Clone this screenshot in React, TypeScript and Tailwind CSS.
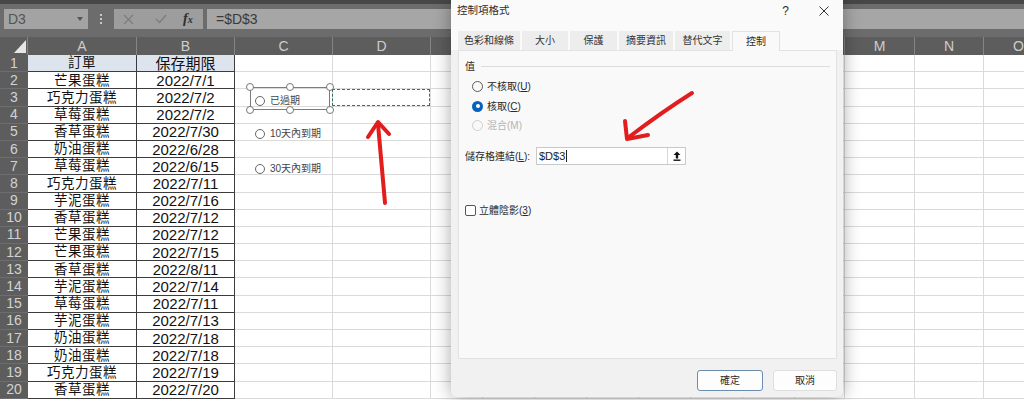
import React from "react";

// E-L sit under the dialog, so their letters are left out
const cols = [
  { k: "A", w: "w-[109px]" },
  { k: "B", w: "w-[98px]" },
  { k: "C", w: "w-[98px]" },
  { k: "D", w: "w-[98px]" },
  { k: "E", w: "w-[52px]", covered: true },
  { k: "F", w: "w-[52px]", covered: true },
  { k: "G", w: "w-[52px]", covered: true },
  { k: "H", w: "w-[52px]", covered: true },
  { k: "I", w: "w-[52px]", covered: true },
  { k: "J", w: "w-[52px]", covered: true },
  { k: "K", w: "w-[52px]", covered: true },
  { k: "L", w: "w-[50px]", covered: true },
  { k: "M", w: "w-[70px]" },
  { k: "N", w: "w-[69px]" },
  { k: "O", w: "w-[70px]" },
];

const orders = [
  ["訂單", "保存期限"],
  ["芒果蛋糕", "2022/7/1"],
  ["巧克力蛋糕", "2022/7/2"],
  ["草莓蛋糕", "2022/7/2"],
  ["香草蛋糕", "2022/7/30"],
  ["奶油蛋糕", "2022/6/28"],
  ["草莓蛋糕", "2022/6/15"],
  ["巧克力蛋糕", "2022/7/11"],
  ["芋泥蛋糕", "2022/7/16"],
  ["香草蛋糕", "2022/7/12"],
  ["芒果蛋糕", "2022/7/12"],
  ["芒果蛋糕", "2022/7/15"],
  ["香草蛋糕", "2022/8/11"],
  ["芋泥蛋糕", "2022/7/14"],
  ["草莓蛋糕", "2022/7/11"],
  ["芋泥蛋糕", "2022/7/13"],
  ["奶油蛋糕", "2022/7/18"],
  ["奶油蛋糕", "2022/7/18"],
  ["巧克力蛋糕", "2022/7/19"],
  ["香草蛋糕", "2022/7/20"],
];

const tabs = [
  { t: "色彩和線條", w: "w-[62px]" },
  { t: "大小", w: "w-[46px]" },
  { t: "保護", w: "w-[47px]" },
  { t: "摘要資訊", w: "w-[54px]" },
  { t: "替代文字", w: "w-[55px]" },
  { t: "控制", w: "w-[48px]", active: true },
];

function FormulaBar() {
  return (
    <div className="h-[37px] bg-[#6c6c6c] border-t-[4px] border-[#474747] flex items-start pt-[5px] pl-[4px] gap-[8px]">
      {/* name box */}
      <div className="w-[84px] shrink-0 h-[20px] bg-[#a3a3a3] flex items-center justify-between pl-[4px] pr-[5px] text-[14px] text-[#555]">
        <span>D3</span>
        <svg width="6" height="4" viewBox="0 0 6 4">
          <path d="M0 0 L6 0 L3 4 Z" fill="#555" />
        </svg>
      </div>
      <div className="w-[10px] shrink-0 h-[20px] flex flex-col items-center justify-center gap-[2px]">
        <span className="w-[2px] h-[2px] bg-[#c8c8c8]" />
        <span className="w-[2px] h-[2px] bg-[#c8c8c8]" />
        <span className="w-[2px] h-[2px] bg-[#c8c8c8]" />
      </div>
      <div className="w-[89px] shrink-0 h-[20px] bg-[#9d9d9d] flex items-center pl-[9px]">
        <svg width="11" height="11" viewBox="0 0 11 11" className="mr-[21px]">
          <path d="M1 1 L10 10 M10 1 L1 10" stroke="#7c7c7c" strokeWidth="1.2" />
        </svg>
        <svg width="12" height="10" viewBox="0 0 12 10" className="mr-[16px]">
          <path d="M1 5 L4.5 8.5 L11 1" stroke="#7c7c7c" strokeWidth="1.2" fill="none" />
        </svg>
        <span className="font-['Liberation_Serif',serif] italic text-[14px] text-[#2e2e2e] font-bold leading-none">
          f<span className="text-[10px]">x</span>
        </span>
      </div>
      <div className="flex-1 h-[20px] bg-[#a6a6a6] flex items-center pl-[9px] text-[14px] text-[#3a3a3a] -ml-[4px]">
        =$D$3
      </div>
    </div>
  );
}

function ColumnHeaders() {
  return (
    <div className="flex h-[18px] bg-[#5d5d5d] text-[14px] text-[#cdcdcd]">
      <div className="w-[28px] shrink-0 h-full flex items-end justify-end pr-[1px] pb-[2px] border-r border-[#858585]">
        <svg width="12" height="13" viewBox="0 0 12 13">
          <path d="M12 0 L12 13 L0 13 Z" fill="#e6e6e6" />
        </svg>
      </div>
      {cols.map((c) => (
        <div
          key={c.k}
          className={`${c.w} shrink-0 h-full flex items-center justify-center border-r border-[#858585]`}
        >
          {c.covered ? "" : c.k}
        </div>
      ))}
    </div>
  );
}

function SheetRow({ n }: { n: number }) {
  const data = orders[n - 1];
  return (
    <div className="flex h-[17.2px]">
      <div className="w-[28px] shrink-0 h-full bg-[#5d5d5d] border-b border-[#6e6e6e] flex items-center justify-center text-[14px] text-[#d2d2d2]">
        {n}
      </div>
      {cols.map((c, i) => {
        const inTable = i < 2;
        const head = n === 1 && inTable;
        return (
          <div
            key={c.k}
            className={`${c.w} shrink-0 h-full flex items-center justify-center border-r border-b ${
              inTable ? "border-[#3c3c3c]" : "border-[#dadada]"
            } ${head ? "bg-[#dde4ee]" : "bg-white"} ${
              i === 0 ? "text-[13.5px] tracking-[0.5px]" : "text-[15px]"
            } text-[#111] leading-none`}
          >
            {inTable ? data[i] : ""}
          </div>
        );
      })}
    </div>
  );
}

function SheetRadio({ label, top }: { label: string; top: string }) {
  return (
    <div className={`absolute left-[255px] ${top} flex items-center gap-[5px] text-[10px] text-[#444]`}>
      <span className="w-[10px] h-[10px] rounded-full border border-[#666] bg-white" />
      <span>{label}</span>
    </div>
  );
}

function Handle({ pos }: { pos: string }) {
  return (
    <span
      className={`absolute ${pos} w-[8px] h-[8px] rounded-full border border-[#777] bg-white`}
    />
  );
}

function DialogRadio({
  label,
  keyChar,
  state,
}: {
  label: string;
  keyChar: string;
  state: "off" | "on" | "disabled";
}) {
  return (
    <div className="h-[19.5px] flex items-center pl-[7px] gap-[4px]">
      {state === "on" ? (
        <span className="w-[11px] h-[11px] rounded-full bg-[#0a62b8] flex items-center justify-center">
          <span className="w-[4px] h-[4px] rounded-full bg-white" />
        </span>
      ) : (
        <span
          className={`w-[11px] h-[11px] rounded-full border ${
            state === "disabled" ? "border-[#cfcfcf]" : "border-[#5a5a5a]"
          }`}
        />
      )}
      <span className={state === "disabled" ? "text-[#b4b4b4]" : "text-[#2a2a2a]"}>
        {label}(
        {state === "disabled" ? keyChar : <span className="underline">{keyChar}</span>})
      </span>
    </div>
  );
}

function FormatDialog() {
  return (
    <div className="absolute left-[451px] top-0 w-[392px] h-[397px] bg-[#f1f1f1] rounded-b-[6px] shadow-[0_0_18px_rgba(0,0,0,0.35)] flex flex-col text-[10px] text-[#2a2a2a]">
      {/* title bar */}
      <div className="h-[31px] bg-[#fafafa] flex flex-col">
        <div className="h-[22px] flex items-center pl-[6px] pr-[14px]">
          <span className="flex-1 text-[10.5px]">控制項格式</span>
          <span className="text-[12px] mr-[30px] font-['Liberation_Sans',sans-serif]">?</span>
          <svg width="10" height="10" viewBox="0 0 10 10">
            <path d="M0.5 0.5 L9.5 9.5 M9.5 0.5 L0.5 9.5" stroke="#333" strokeWidth="1" />
          </svg>
        </div>
      </div>
      {/* tabs */}
      <div className="h-[19px] flex items-end gap-[2px] px-[7px] bg-[#fafafa]">
        {tabs.map((t) =>
          t.active ? (
            <div
              key={t.t}
              className={`${t.w} h-[20px] bg-[#f9f9f9] border border-b-0 border-[#e2e2e2] flex items-center justify-center -mb-px relative z-10`}
            >
              {t.t}
            </div>
          ) : (
            <div
              key={t.t}
              className={`${t.w} h-[19px] bg-[#ededed] flex items-center justify-center text-[#333]`}
            >
              {t.t}
            </div>
          )
        )}
      </div>
      {/* panel */}
      <div className="mx-[7px] w-[379px] h-[309px] bg-[#f9f9f9] border border-[#e2e2e2] pt-[9px] px-[6px]">
        <div className="flex items-center gap-[6px] h-[12px]">
          <span>值</span>
          <span className="flex-1 h-px bg-[#dcdcdc]" />
        </div>
        <div className="mt-[5px]">
          <DialogRadio label="不核取" keyChar="U" state="off" />
          <DialogRadio label="核取" keyChar="C" state="on" />
          <DialogRadio label="混合" keyChar="M" state="disabled" />
        </div>
        <div className="mt-[12px] h-[17px] flex items-center">
          <span className="w-[71px]">
            儲存格連結(<span className="underline">L</span>):
          </span>
          <div className="w-[150px] h-[18px] bg-white border border-[#c9c9c9] flex items-center">
            <span className="flex-1 pl-[2px] text-[11px] text-[#222] font-['Liberation_Sans',sans-serif] flex items-center">
              $D$3<span className="w-px h-[12px] bg-[#222] ml-px" />
            </span>
            <div className="w-[18px] h-full border-l border-[#d6d6d6] flex items-center justify-center">
              <svg width="8" height="10" viewBox="0 0 8 10">
                <path d="M4 0.5 L7.5 4 L5.2 4 L5.2 7.5 L2.8 7.5 L2.8 4 L0.5 4 Z" fill="#111" />
                <rect x="0.5" y="8.5" width="7" height="1.4" fill="#111" />
              </svg>
            </div>
          </div>
        </div>
        <div className="mt-[38px] flex items-center gap-[3px]">
          <span className="w-[11px] h-[11px] border border-[#555] rounded-[2px] bg-white" />
          <span>
            立體陰影(<span className="underline">3</span>)
          </span>
        </div>
      </div>
      {/* buttons */}
      <div className="mt-[11px] flex justify-end gap-[10px] pr-[6px]">
        <div className="w-[66px] h-[21px] rounded-[3px] bg-[#fdfdfd] border border-[#6a8db0] flex items-center justify-center">
          確定
        </div>
        <div className="w-[64px] h-[21px] rounded-[3px] bg-[#fdfdfd] border border-[#dedede] flex items-center justify-center">
          取消
        </div>
      </div>
    </div>
  );
}

export default function App() {
  return (
    <div className="relative w-[1024px] h-[400px] overflow-hidden bg-white font-['Liberation_Sans','Noto_Sans_CJK_TC',sans-serif]">
      <FormulaBar />
      <ColumnHeaders />
      {orders.map((_, i) => (
        <SheetRow key={i} n={i + 1} />
      ))}

      {/* option buttons on the sheet */}
      <div className="absolute left-[250px] top-[87px] w-[80px] h-[23px] border border-[#7c7c7c]" />
      <Handle pos="left-[246px] top-[83px]" />
      <Handle pos="left-[286px] top-[83px]" />
      <Handle pos="left-[326px] top-[83px]" />
      <Handle pos="left-[246px] top-[106px]" />
      <Handle pos="left-[286px] top-[106px]" />
      <Handle pos="left-[326px] top-[106px]" />
      <SheetRadio label="已過期" top="top-[93px]" />
      <SheetRadio label="10天內到期" top="top-[126px]" />
      <SheetRadio label="30天內到期" top="top-[161px]" />
      <div className="absolute left-[332px] top-[89px] w-[98px] h-[17px] border-[1.5px] border-dashed border-[#2f7a55]" />

      <FormatDialog />

      {/* red annotation arrows */}
      <svg className="absolute left-0 top-0 pointer-events-none" width="1024" height="400">
        <g stroke="#e11d1d" strokeWidth="4" strokeLinecap="round" strokeLinejoin="round" fill="none">
          <path d="M385 203 L378 124" />
          <path d="M368 137 L378 122 L389 134" />
          <path d="M692 93 Q662 112 629 137" />
          <path d="M625 121 L627 139 L648 135" />
        </g>
      </svg>
    </div>
  );
}
